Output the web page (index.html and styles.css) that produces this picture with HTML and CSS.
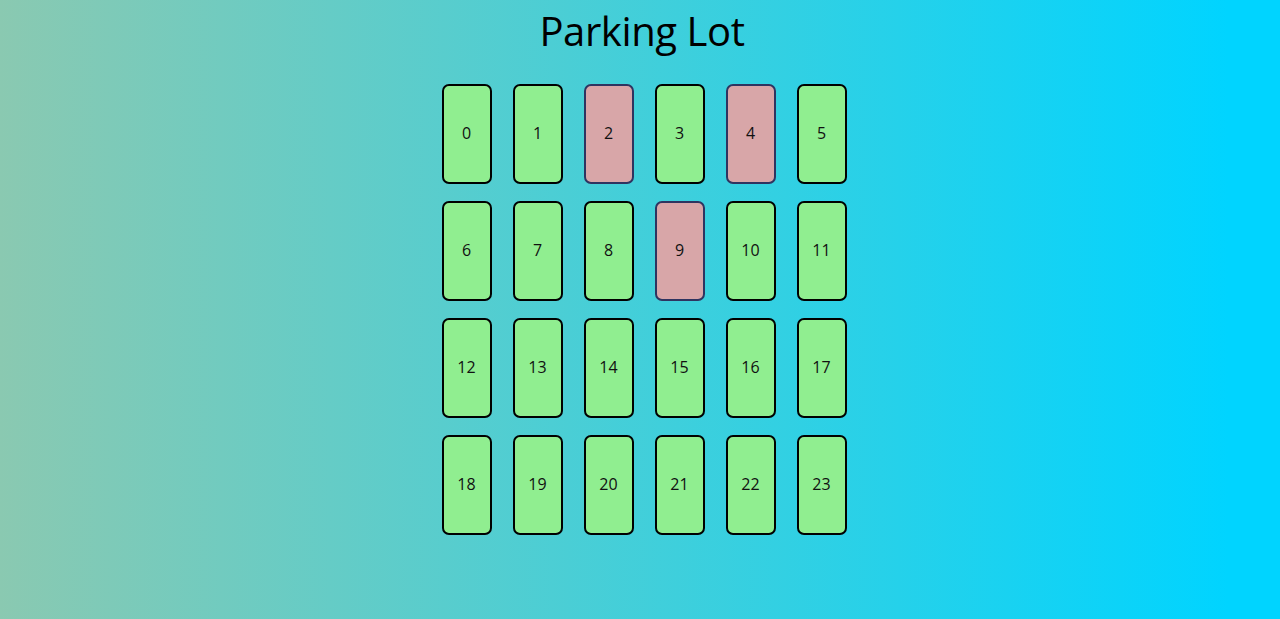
FILE: index.html
```html
<!DOCTYPE html>
<html lang="en">
<head>
<meta charset="utf-8">
<title>Parking Lot</title>
<link rel="stylesheet" href="styles.css">
</head>
<body>
<main class="page">
  <h1 class="title">Parking Lot</h1>
  <div class="lot">
    <div class="spot free">0</div>
    <div class="spot free">1</div>
    <div class="spot taken">2</div>
    <div class="spot free">3</div>
    <div class="spot taken">4</div>
    <div class="spot free">5</div>
    <div class="spot free">6</div>
    <div class="spot free">7</div>
    <div class="spot free">8</div>
    <div class="spot taken">9</div>
    <div class="spot free">10</div>
    <div class="spot free">11</div>
    <div class="spot free">12</div>
    <div class="spot free">13</div>
    <div class="spot free">14</div>
    <div class="spot free">15</div>
    <div class="spot free">16</div>
    <div class="spot free">17</div>
    <div class="spot free">18</div>
    <div class="spot free">19</div>
    <div class="spot free">20</div>
    <div class="spot free">21</div>
    <div class="spot free">22</div>
    <div class="spot free">23</div>
  </div>
</main>
</body>
</html>
```

FILE: styles.css
```css
html, body {
  margin: 0;
  padding: 0;
  height: 100%;
}
body {
  background: linear-gradient(90deg, #8ac9b1 0%, #00d4ff 96%);
  font-family: "Open Sans", "Noto Sans", sans-serif;
  color: #000;
}
.page {
  display: flex;
  flex-direction: column;
  align-items: center;
}
.title {
  margin: 4px 0 0 4px;
  font-weight: 400;
  font-size: 40px;
  line-height: 54px;
  letter-spacing: -0.4px;
}
.lot {
  display: grid;
  grid-template-columns: repeat(6, 50px);
  grid-auto-rows: 100px;
  column-gap: 21px;
  row-gap: 17px;
  margin: 26px 0 0 8px;
}
.spot {
  box-sizing: border-box;
  border: 2px solid #000;
  border-radius: 7px;
  display: flex;
  align-items: center;
  justify-content: center;
  padding-bottom: 2px;
  font-size: 16px;
  color: #111;
}
.free {
  background: #90ee90;
}
.taken {
  background: #d8a6a8;
  border-color: #2f3460;
}
```
